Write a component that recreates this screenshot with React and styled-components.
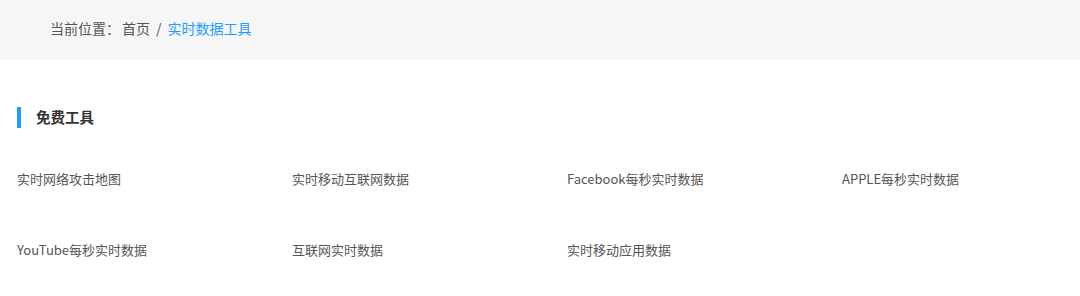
import React from "react";
import styled, { createGlobalStyle } from "styled-components";

const GlobalStyle = createGlobalStyle`
  html, body {
    margin: 0;
    padding: 0;
    background: #fff;
    font-family: "Microsoft YaHei", "Noto Sans CJK SC", "Noto Sans", sans-serif;
  }
`;

const Crumbs = styled.div`
  height: 60px;
  box-sizing: border-box;
  background: #f6f6f6;
  display: flex;
  align-items: center;
  padding: 0 0 4px 50px;
  font-size: 14px;
  line-height: 20px;
  color: #555;
`;

const CrumbLink = styled.span`
  color: ${(p) => (p.current ? "#1e9fff" : "#555")};
  margin-left: ${(p) => (p.current ? "0" : "2px")};
`;

const Sep = styled.span`
  margin: 0 6px;
  color: #555;
`;

const Section = styled.section`
  padding: 46px 17px 0;
`;

const SectionTitle = styled.h2`
  margin: 0;
  display: flex;
  align-items: center;
  gap: 15px;
  font-size: 14.5px;
  font-weight: bold;
  line-height: 22px;
  color: #333;

  &::before {
    content: "";
    width: 4px;
    height: 21px;
    background: #1e9fff;
  }
`;

const ToolGrid = styled.div`
  display: grid;
  grid-template-columns: repeat(4, 275px);
  grid-auto-rows: 71px;
  margin-top: 15px;
`;

const Tool = styled.a`
  display: flex;
  align-items: center;
  font-size: 13px;
  color: #555;
  text-decoration: none;
  white-space: nowrap;
`;

const tools = [
  "实时网络攻击地图",
  "实时移动互联网数据",
  "Facebook每秒实时数据",
  "APPLE每秒实时数据",
  "YouTube每秒实时数据",
  "互联网实时数据",
  "实时移动应用数据",
];

export default function App() {
  return (
    <>
      <GlobalStyle />
      <Crumbs>
        当前位置：<CrumbLink>首页</CrumbLink>
        <Sep>/</Sep>
        <CrumbLink current>实时数据工具</CrumbLink>
      </Crumbs>
      <Section>
        <SectionTitle>免费工具</SectionTitle>
        <ToolGrid>
          {tools.map((name) => (
            <Tool key={name} href="#">
              {name}
            </Tool>
          ))}
        </ToolGrid>
      </Section>
    </>
  );
}
